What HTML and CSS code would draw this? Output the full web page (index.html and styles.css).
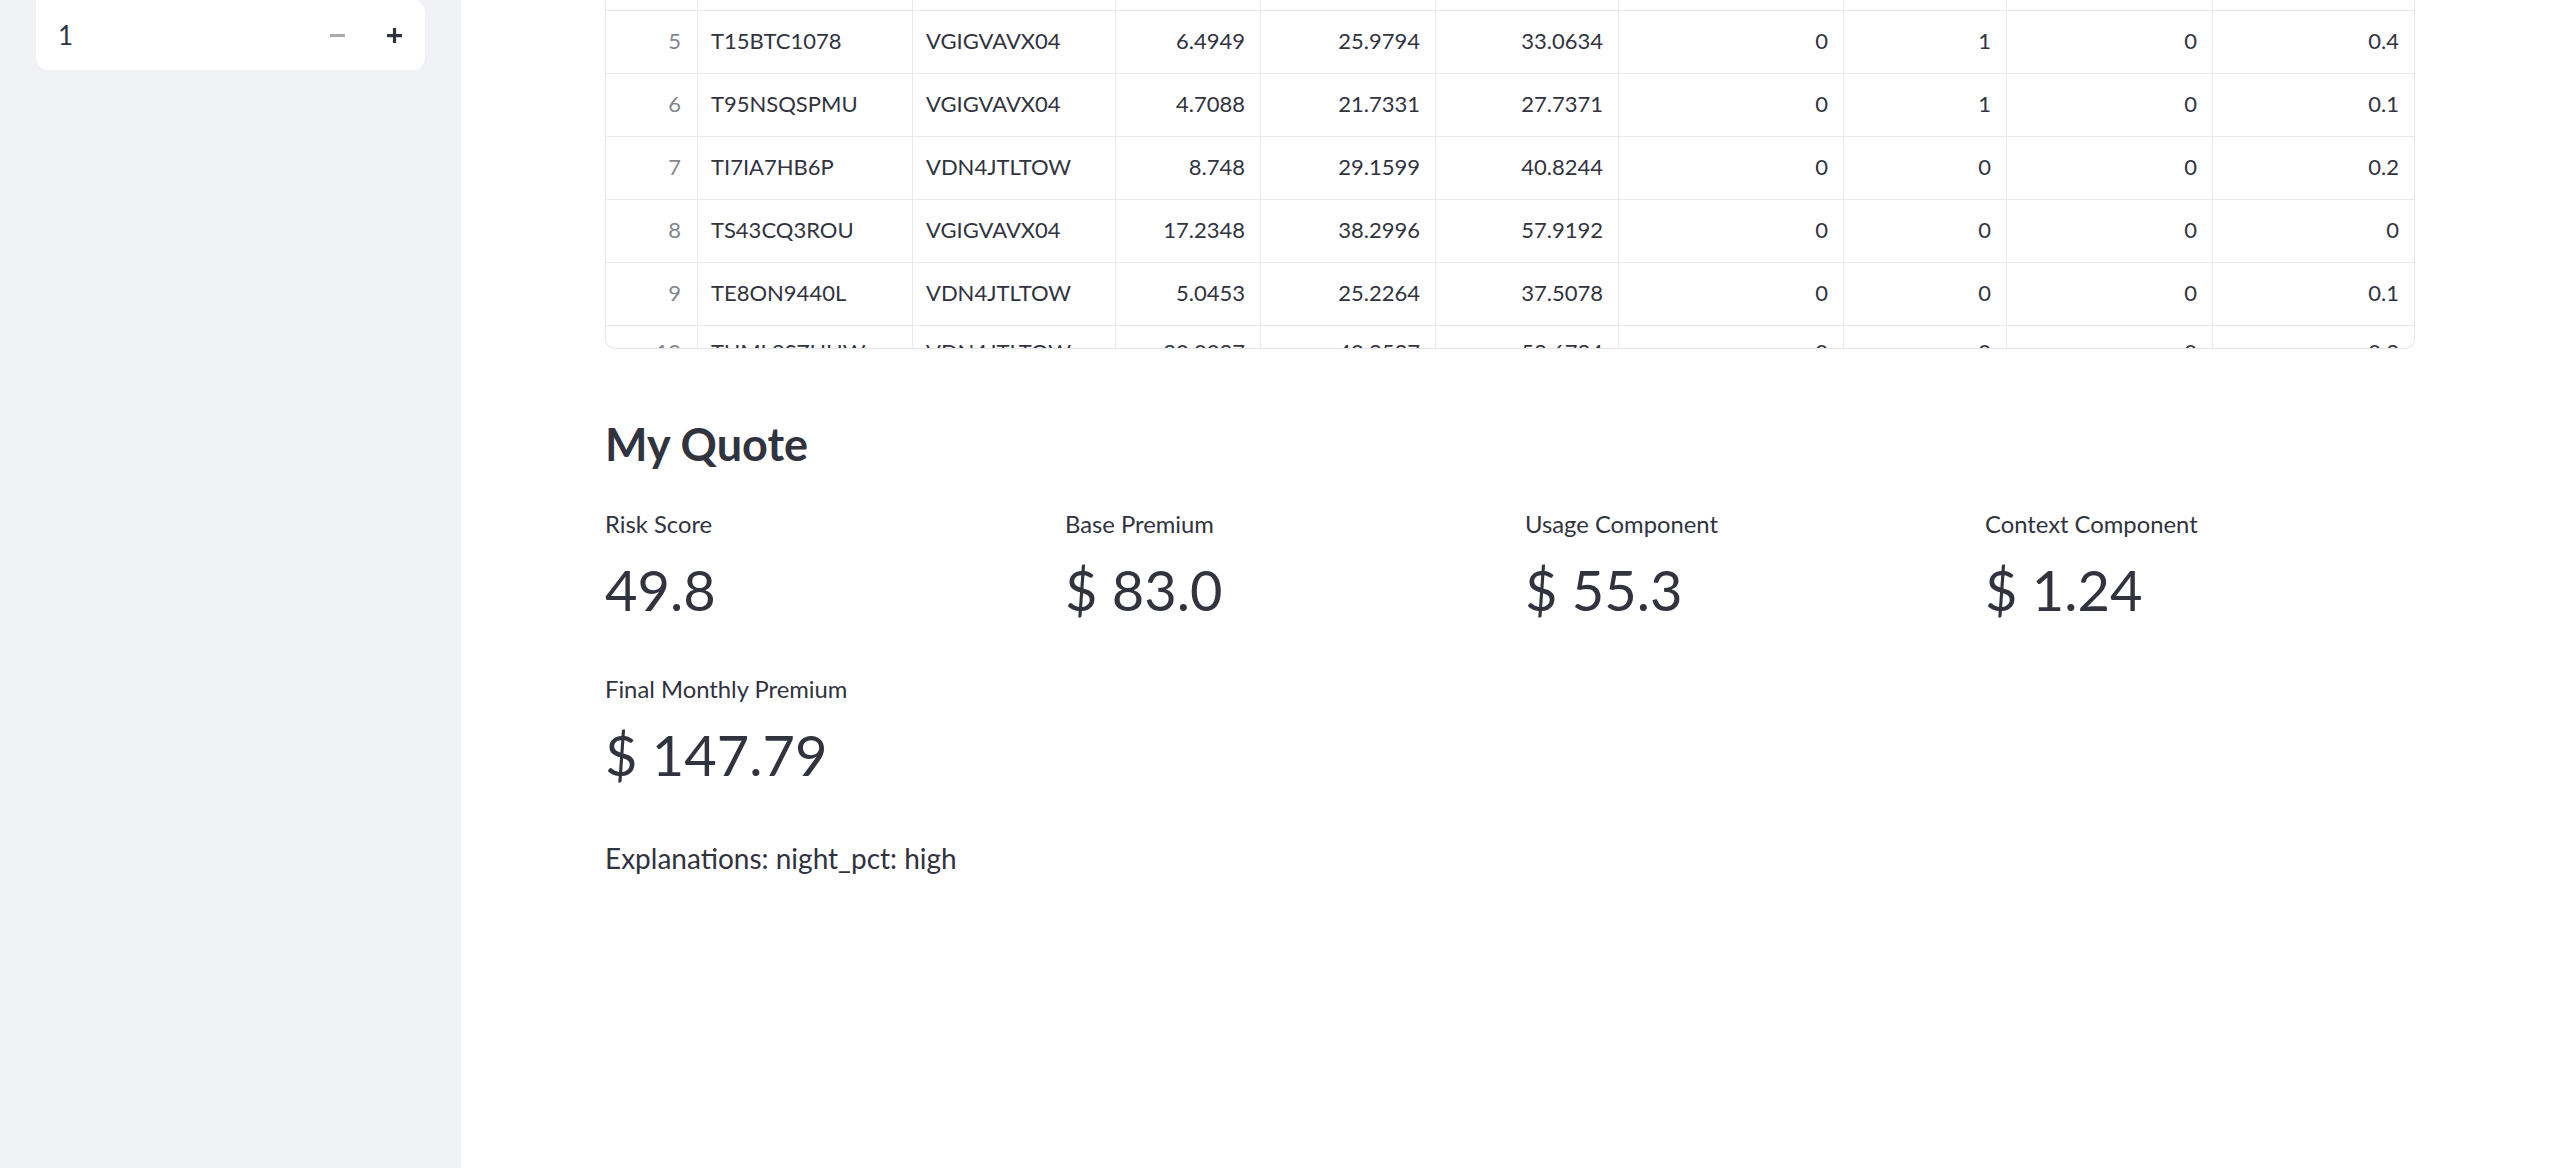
FILE: index.html
```html
<!DOCTYPE html>
<html lang="en">
<head>
<meta charset="utf-8">
<title>My Quote</title>
<link rel="stylesheet" href="styles.css">
</head>
<body>
<div class="app">
  <aside class="sidebar">
    <div class="num-input">
      <span class="num-value">1</span>
      <div class="steps">
        <button class="step minus" aria-label="decrement">
          <svg width="15" height="15" viewBox="0 0 15 15"><rect x="0" y="6" width="15" height="3" rx="0.5" fill="currentColor"/></svg>
        </button>
        <button class="step plus" aria-label="increment">
          <svg width="15" height="15" viewBox="0 0 15 15"><rect x="0" y="6" width="15" height="3.2" fill="currentColor"/><rect x="5.9" y="0" width="3.2" height="15" fill="currentColor"/></svg>
        </button>
      </div>
    </div>
  </aside>
  <main class="main">
    <div class="content">
      <div class="grid-wrap">
        <div class="row row-partial">
          <div class="cell"></div><div class="cell"></div><div class="cell"></div><div class="cell"></div><div class="cell"></div><div class="cell"></div><div class="cell"></div><div class="cell"></div><div class="cell"></div><div class="cell"></div>
        </div>
        <div class="row">
          <div class="cell idx">5</div><div class="cell txt">T15BTC1078</div><div class="cell txt">VGIGVAVX04</div><div class="cell num">6.4949</div><div class="cell num">25.9794</div><div class="cell num">33.0634</div><div class="cell num">0</div><div class="cell num">1</div><div class="cell num">0</div><div class="cell num">0.4</div>
        </div>
        <div class="row">
          <div class="cell idx">6</div><div class="cell txt">T95NSQSPMU</div><div class="cell txt">VGIGVAVX04</div><div class="cell num">4.7088</div><div class="cell num">21.7331</div><div class="cell num">27.7371</div><div class="cell num">0</div><div class="cell num">1</div><div class="cell num">0</div><div class="cell num">0.1</div>
        </div>
        <div class="row">
          <div class="cell idx">7</div><div class="cell txt">TI7IA7HB6P</div><div class="cell txt">VDN4JTLTOW</div><div class="cell num">8.748</div><div class="cell num">29.1599</div><div class="cell num">40.8244</div><div class="cell num">0</div><div class="cell num">0</div><div class="cell num">0</div><div class="cell num">0.2</div>
        </div>
        <div class="row">
          <div class="cell idx">8</div><div class="cell txt">TS43CQ3ROU</div><div class="cell txt">VGIGVAVX04</div><div class="cell num">17.2348</div><div class="cell num">38.2996</div><div class="cell num">57.9192</div><div class="cell num">0</div><div class="cell num">0</div><div class="cell num">0</div><div class="cell num">0</div>
        </div>
        <div class="row">
          <div class="cell idx">9</div><div class="cell txt">TE8ON9440L</div><div class="cell txt">VDN4JTLTOW</div><div class="cell num">5.0453</div><div class="cell num">25.2264</div><div class="cell num">37.5078</div><div class="cell num">0</div><div class="cell num">0</div><div class="cell num">0</div><div class="cell num">0.1</div>
        </div>
        <div class="row row-cut">
          <div class="cell idx">10</div><div class="cell txt">TUML9SZUHW</div><div class="cell txt">VDN4JTLTOW</div><div class="cell num">30.0027</div><div class="cell num">40.3537</div><div class="cell num">53.6724</div><div class="cell num">0</div><div class="cell num">0</div><div class="cell num">0</div><div class="cell num">0.3</div>
        </div>
      </div>

      <h3 class="title">My Quote</h3>

      <div class="metrics">
        <div class="metric">
          <div class="metric-label">Risk Score</div>
          <div class="metric-value">49.8</div>
        </div>
        <div class="metric">
          <div class="metric-label">Base Premium</div>
          <div class="metric-value">$ 83.0</div>
        </div>
        <div class="metric">
          <div class="metric-label">Usage Component</div>
          <div class="metric-value">$ 55.3</div>
        </div>
        <div class="metric">
          <div class="metric-label">Context Component</div>
          <div class="metric-value">$ 1.24</div>
        </div>
      </div>

      <div class="metrics metrics-second">
        <div class="metric">
          <div class="metric-label">Final Monthly Premium</div>
          <div class="metric-value">$ 147.79</div>
        </div>
      </div>

      <p class="explain">Explanations: night_pct: high</p>
    </div>
  </main>
</div>
</body>
</html>
```

FILE: styles.css
```css
html, body {
  margin: 0;
  padding: 0;
  height: 1168px;
  overflow: hidden;
  background: #ffffff;
}

body {
  font-family: "Source Sans Pro", "Lato", "Noto Sans", sans-serif;
  color: #31333f;
}

.app {
  display: flex;
  height: 1168px;
}

/* ---------- sidebar ---------- */
.sidebar {
  width: 461px;
  flex: 0 0 461px;
  background: #f0f2f6;
  padding: 0 36px;
  box-sizing: border-box;
}

.num-input {
  height: 70px;
  background: #ffffff;
  border-radius: 0 13px 13px 13px;
  display: flex;
  align-items: center;
  padding-left: 22px;
  box-sizing: border-box;
}

.num-value {
  flex: 1;
  font-size: 26px;
  line-height: 1;
  color: #31333f;
}

.steps {
  display: flex;
  height: 100%;
  margin-right: 2px;
}

.step {
  width: 57px;
  height: 100%;
  border: 0;
  padding: 0;
  background: transparent;
  display: flex;
  align-items: center;
  justify-content: center;
  cursor: pointer;
}

.step.minus { color: #a7aab3; }
.step.plus { color: #31333f; }

/* ---------- main ---------- */
.main {
  flex: 1;
  padding-left: 144px;
  box-sizing: border-box;
}

.content {
  width: 1810px;
}

/* dataframe */
.grid-wrap {
  height: 349px;
  border: 1px solid #e6e6ea;
  border-top: 0;
  border-radius: 0 0 10px 10px;
  overflow: hidden;
  box-sizing: border-box;
}

.row {
  display: grid;
  grid-template-columns: 92px 215px 203px 145px 175px 183px 225px 163px 206px 1fr;
  height: 63px;
  border-bottom: 1px solid #eaeaec;
  box-sizing: border-box;
  font-size: 22px;
}

.row-partial {
  height: 11px;
}

.cell {
  border-right: 1px solid #eaeaec;
  display: flex;
  align-items: center;
  white-space: nowrap;
  overflow: hidden;
  color: #31333f;
  padding-bottom: 4px;
  box-sizing: border-box;
}

.cell:last-child {
  border-right: 0;
}

.row-partial .cell {
  padding-bottom: 0;
}

.row-cut .cell {
  padding-bottom: 11px;
}

.cell.idx {
  justify-content: flex-end;
  padding-right: 16px;
  color: #84858d;
}

.cell.txt {
  padding-left: 13px;
}

.cell.num {
  justify-content: flex-end;
  padding-right: 15px;
}

/* heading */
.title {
  margin: 65px 0 0 0;
  font-size: 45px;
  line-height: 60px;
  font-weight: 700;
  color: #31333f;
}

/* metrics */
.metrics {
  display: grid;
  grid-template-columns: repeat(4, 1fr);
  column-gap: 30px;
  margin-top: 35px;
}

.metrics-second {
  margin-top: 44px;
}

.metric-label {
  font-size: 23.8px;
  line-height: 30px;
  color: #31333f;
}

.metric-value {
  margin-top: 11px;
  font-size: 56px;
  line-height: 80px;
  color: #31333f;
}

.explain {
  margin: 43px 0 0 0;
  font-size: 28px;
  line-height: 40px;
  color: #31333f;
}
```
